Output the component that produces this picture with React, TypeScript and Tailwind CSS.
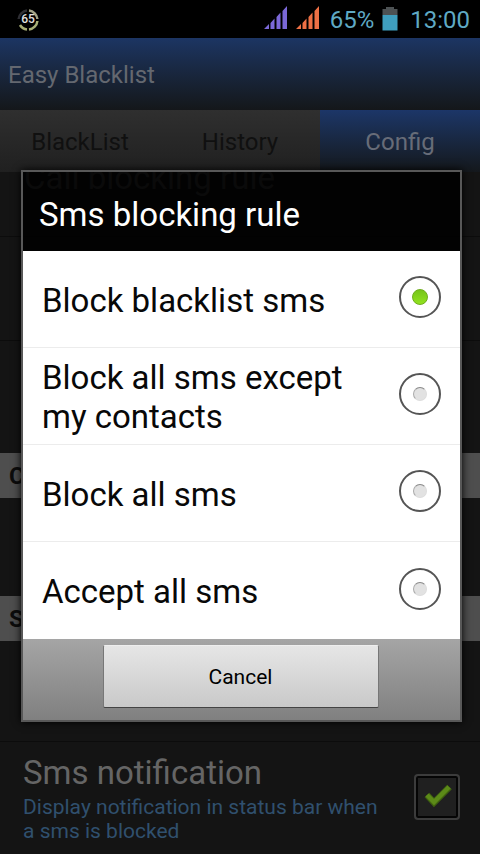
import { useState } from "react";

const RULES = [
  "Block blacklist sms",
  "Block all sms except my contacts",
  "Block all sms",
  "Accept all sms",
];

function SignalIcon({ className }: { className: string }) {
  return (
    <svg width="24" height="24" viewBox="0 0 24 24" className={className} fill="currentColor" aria-hidden="true">
      <path d="M0 23 L5 18 V23 Z M6.500 23 V17 L10.500 12.500 V23 Z M12.500 23 V11 L16.500 6.500 V23 Z M18.500 23 V5 L23 0 V23 Z" />
    </svg>
  );
}

function BatteryIcon() {
  return (
    <svg width="16" height="24" viewBox="0 0 16 24" aria-hidden="true">
      <path d="M4 0 H12 V2 H15.500 V8 H0.500 V2 H4 Z" fill="#4d5254" />
      <rect x="0.500" y="8" width="15" height="15.500" fill="#3f9fbf" />
    </svg>
  );
}

function BatteryRing() {
  return (
    <svg width="24" height="24" viewBox="0 0 24 24" aria-hidden="true">
      <path d="M2.600 11 A9.500 9.500 0 0 1 11 2.500" fill="none" stroke="#2e2e33" strokeWidth="2.500" />
      <path d="M13 2.500 A9.500 9.500 0 0 1 21.400 11" fill="none" stroke="#a3a386" strokeWidth="2.500" />
      <path d="M21.400 13 A9.500 9.500 0 0 1 13 21.500 M11 21.500 A9.500 9.500 0 0 1 4 17" fill="none" stroke="#a9b077" strokeWidth="2.500" />
      <text x="12" y="15" textAnchor="middle" fontSize="12" fontWeight="500" fill="#e2e2e2">65</text>
    </svg>
  );
}

function StatusBar() {
  return (
    <div className="flex h-[38px] shrink-0 items-center bg-black pt-px pr-2.5 pl-4 text-2xl text-[#5fa9c4]">
      <BatteryRing />
      <div className="ml-auto flex items-center">
        <SignalIcon className="mr-2 mb-1 text-[#7b68d8]" />
        <SignalIcon className="mr-2.5 mb-1 text-[#ee7045]" />
        <span>65%</span>
        <span className="mr-3 mb-0.5 ml-2">
          <BatteryIcon />
        </span>
        <span>13:00</span>
      </div>
    </div>
  );
}

function SectionHeader({ children }: { children: string }) {
  return (
    <h2 className="h-[45px] bg-[#4e4e4e] px-[9px] pt-px text-2xl leading-[45px] font-bold text-[#0c0c0c]">
      {children}
    </h2>
  );
}

export default function App() {
  const [rule, setRule] = useState(0);
  const [open, setOpen] = useState(true);
  const [notify, setNotify] = useState(true);

  return (
    <div className="relative flex h-screen flex-col overflow-hidden bg-[#141414] font-[Roboto,sans-serif]">
      <StatusBar />

      {/* HEADER */}
      <header className="flex h-[72px] shrink-0 items-center bg-linear-to-b from-[#1c3563] to-[#14171a] px-2 pt-0.5">
        <h1 className="text-2xl text-[#646870]">Easy Blacklist</h1>
      </header>

      {/* TABS */}
      <nav className="grid h-[62px] shrink-0 grid-cols-3 text-2xl">
        <button className="bg-linear-to-b from-[#2f2f2f] to-[#202020] pt-0.5 text-[#101010]">BlackList</button>
        <button className="bg-linear-to-b from-[#2f2f2f] to-[#202020] pt-0.5 text-[#101010]">History</button>
        <button className="bg-linear-to-b from-[#1c3668] to-[#14181c] pt-0.5 text-[#676c78]">Config</button>
      </nav>

      {/* SETTINGS */}
      <main className="min-h-0 flex-1 overflow-hidden">
        <div className="flex h-[65px] flex-col justify-end border-b border-[#0c0c0c] px-6 pb-10">
          <p className="text-[33px] leading-9 text-[#656565]">Call blocking rule</p>
        </div>
        <div className="h-[104px] border-b border-[#0c0c0c]" />
        <div className="h-28" />
        <SectionHeader>C</SectionHeader>
        <div className="h-[98px]" />
        <SectionHeader>S</SectionHeader>
        <div className="h-[101px] border-b border-[#0c0c0c]" />
        <label className="flex items-center justify-between pt-2 pr-5 pl-[23px]">
          <span>
            <span className="block text-[33px] leading-[45px] text-[#656565]">Sms notification</span>
            <span className="block max-w-[368px] text-[21px] leading-6 text-[#30506e]">
              Display notification in status bar when a sms is blocked
            </span>
          </span>
          <span className="relative shrink-0">
            <input
              type="checkbox"
              checked={notify}
              onChange={() => setNotify(!notify)}
              className="block size-[46px] appearance-none rounded-sm border-2 border-[#3c3c3c] bg-[#202020] shadow-[inset_0_0_0_2px_#050505]"
            />
            {notify && (
              <svg viewBox="0 0 46 46" className="pointer-events-none absolute inset-0" aria-hidden="true">
                <path d="M13 21 L20 28.500 L35.500 13" fill="none" stroke="#3f6110" strokeWidth="6.500" />
                <path d="M13 21 L20 28 L35 13" fill="none" stroke="#5c8a18" strokeWidth="4.500" />
              </svg>
            )}
          </span>
        </label>
      </main>

      {/* DIALOG */}
      {open && (
        <div className="absolute inset-x-0 top-[38px] bottom-0 flex items-center pr-[18px] pl-[21px]">
          <div
            role="dialog"
            aria-labelledby="dialog-title"
            className="w-full border-2 border-[#585858] shadow-[0_0_8px_#000]"
          >
            <h2
              id="dialog-title"
              className="flex h-[79px] items-center bg-black/90 px-4 pt-1.5 text-[33px] leading-9 text-white"
            >
              Sms blocking rule
            </h2>

            <div className="divide-y divide-[#ececec] bg-white">
              {RULES.map((name, i) => (
                <label key={name} className="flex h-[97px] items-center justify-between px-[19px] pt-0.5">
                  <span className="max-w-[310px] text-[33px] leading-[39px] text-[#080808]">{name}</span>
                  <input
                    type="radio"
                    name="sms-rule"
                    checked={rule === i}
                    onChange={() => setRule(i)}
                    className="mb-1.5 grid size-[42px] shrink-0 appearance-none place-content-center rounded-full border-2 border-[#555] before:size-[14px] before:rounded-full before:border before:border-[#ddd] before:border-t-[#888] before:border-l-[#aaa] before:bg-[#e2e2e2] checked:before:size-4 checked:before:border-[#6fae1c] checked:before:bg-linear-to-b checked:before:from-[#76c41a] checked:before:to-[#92e31f]"
                  />
                </label>
              ))}
            </div>

            {/* ACTIONS */}
            <div className="flex h-[81px] items-start justify-center bg-linear-to-b from-[#a5a5a5] to-[#808080] pt-[6px] pr-0.5">
              <button
                onClick={() => setOpen(false)}
                className="h-[63px] w-[276px] rounded-xs border border-[#777] border-t-[#eee] border-b-[#444] bg-linear-to-b from-[#e6e6e6] to-[#c9c9c9] pt-0.5 text-[21px] text-black"
              >
                Cancel
              </button>
            </div>
          </div>
        </div>
      )}
    </div>
  );
}
